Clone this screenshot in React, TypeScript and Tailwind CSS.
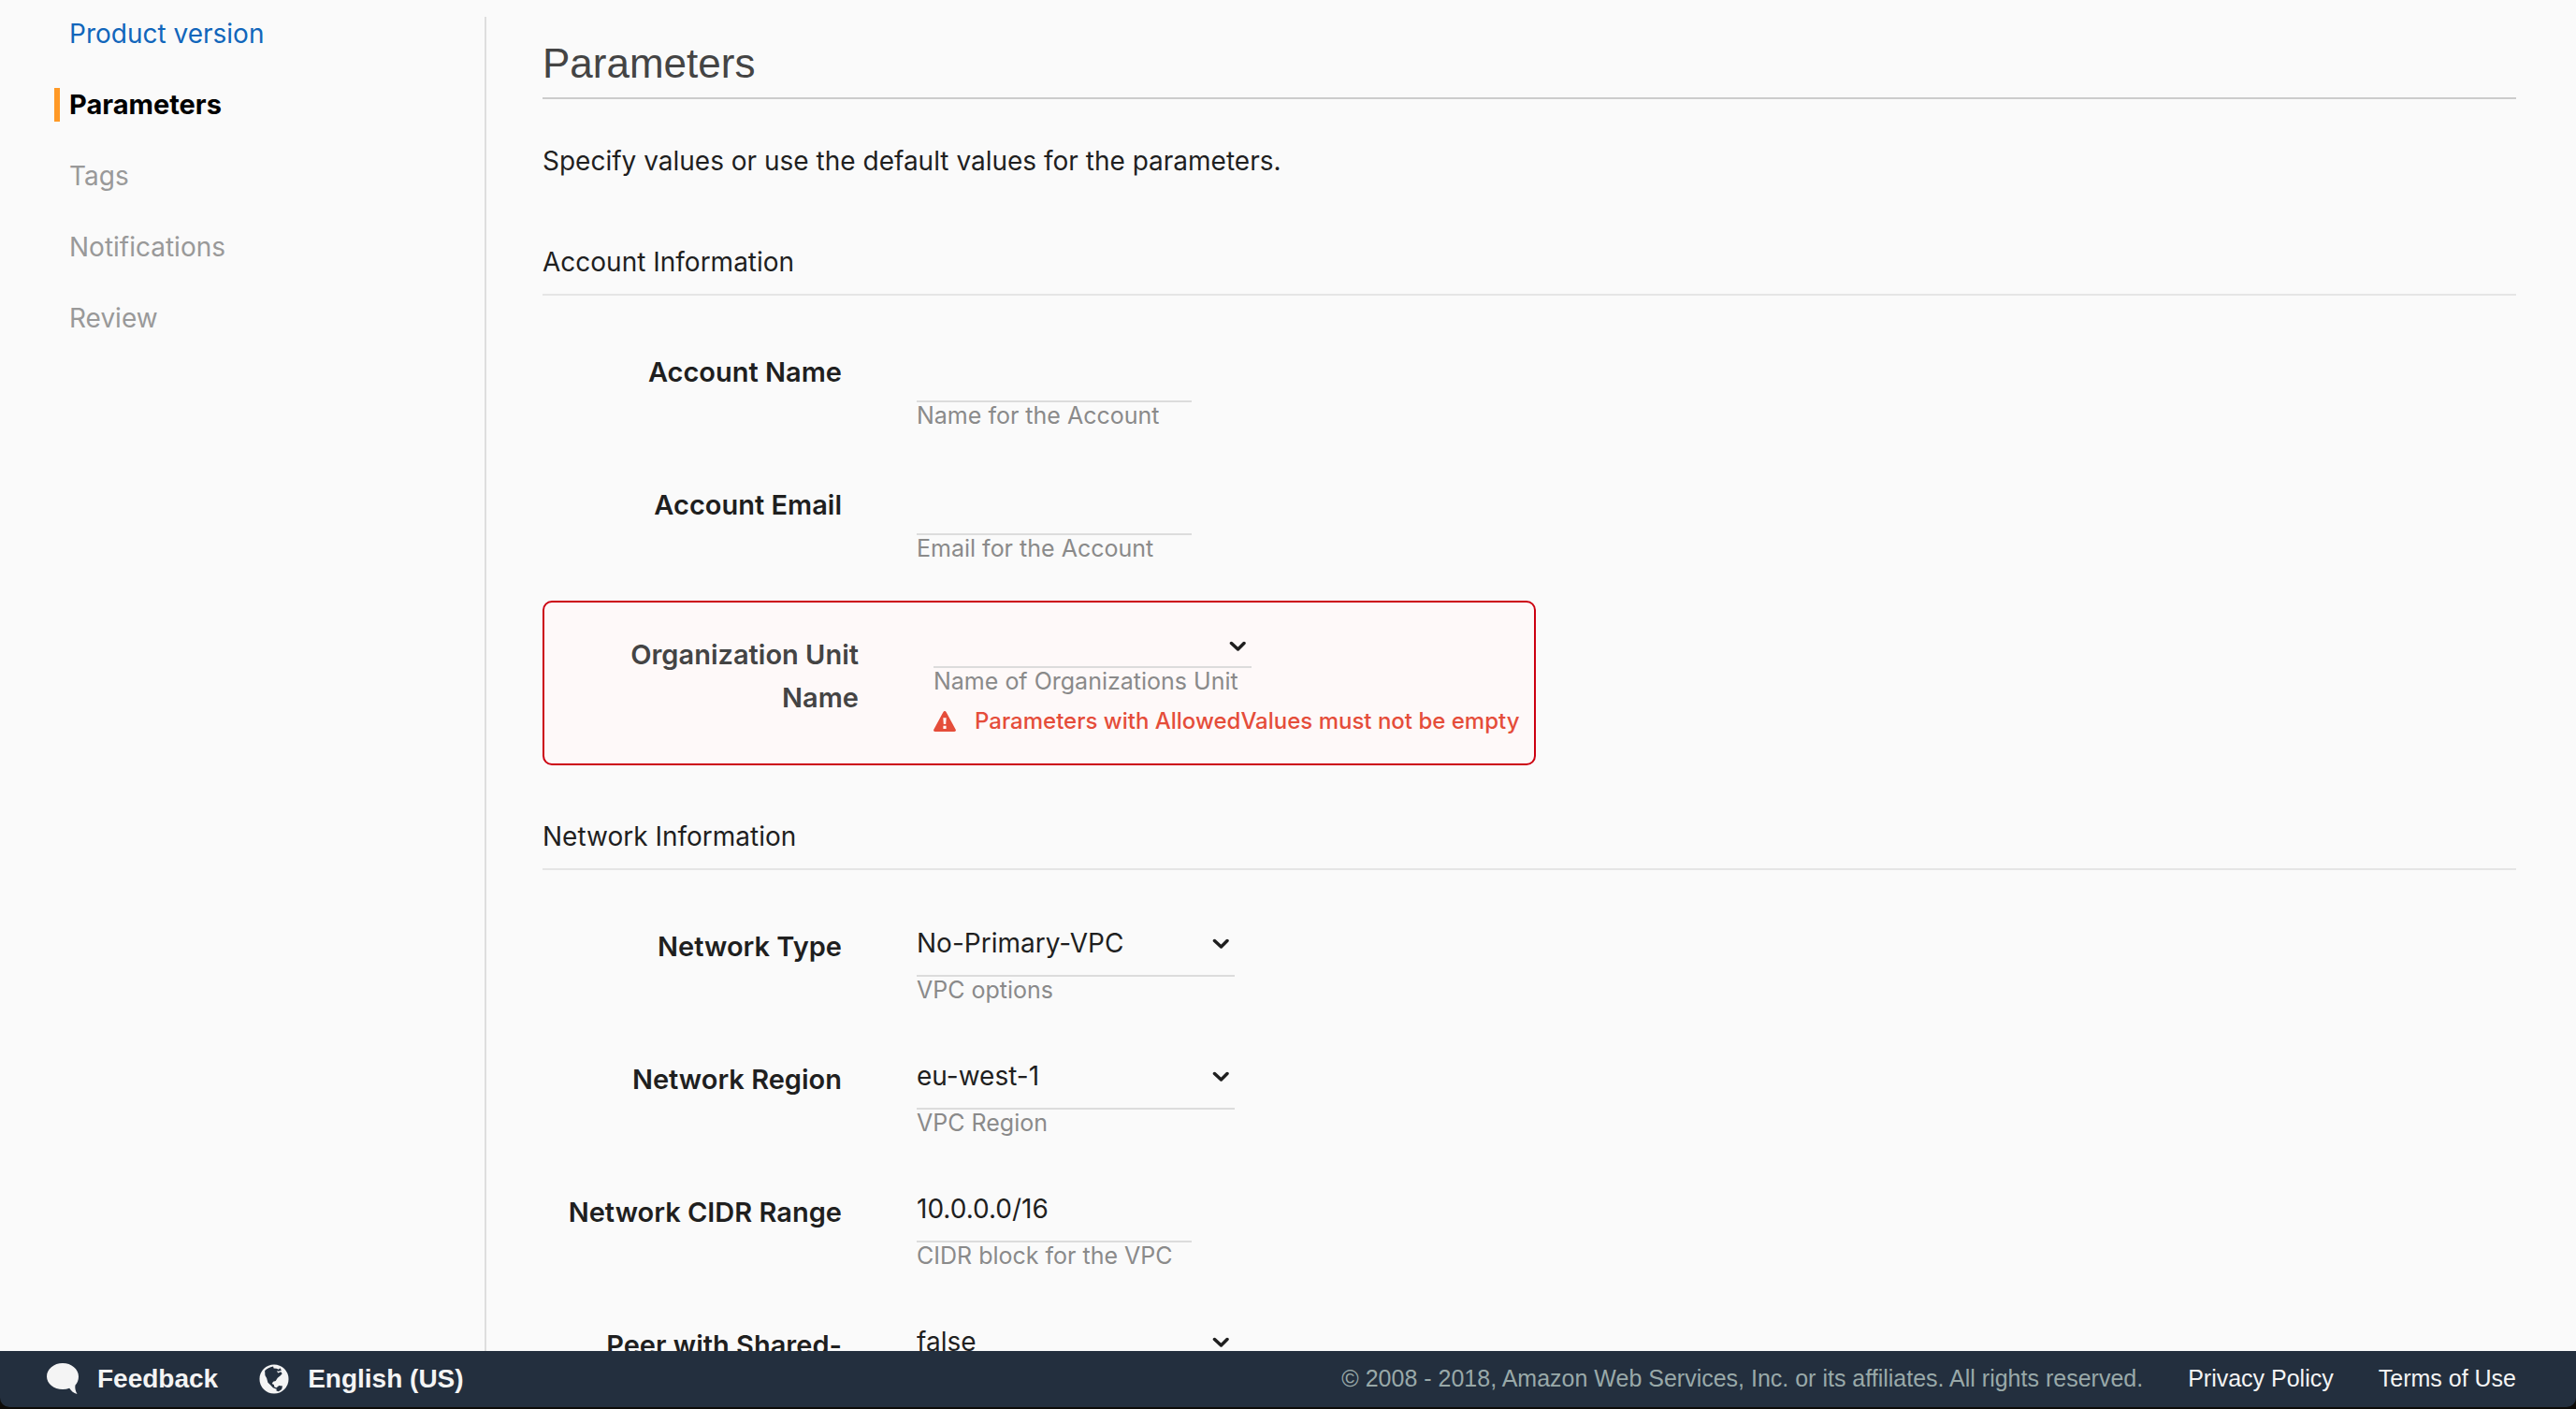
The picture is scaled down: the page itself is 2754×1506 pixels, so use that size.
import type { ReactNode } from "react";

const steps = [
  { label: "Product version", state: "done" },
  { label: "Parameters", state: "current" },
  { label: "Tags", state: "todo" },
  { label: "Notifications", state: "todo" },
  { label: "Review", state: "todo" },
];

const stepStyles: Record<string, string> = {
  done: "border-transparent text-[28px] text-[#1166bb]",
  current: "border-[#ff9926] text-[29px] font-bold text-black",
  todo: "border-transparent text-[28px] text-[#999999]",
};

function Chevron() {
  return (
    <svg
      viewBox="0 0 18 12"
      className="pointer-events-none absolute top-1/2 right-1.5 h-3 w-[18px] -translate-y-1/2"
      fill="none"
      stroke="#1f1f1f"
      strokeWidth="3.5"
      strokeLinecap="round"
      strokeLinejoin="round"
      aria-hidden="true"
    >
      <path d="M2.500 2.500 9.500 9 16 2.500" />
    </svg>
  );
}

function WarningIcon() {
  return (
    <svg viewBox="0 0 24 22" className="h-[22px] w-6 shrink-0" aria-hidden="true">
      <path
        d="M12 0c.7 0 1.200.3 1.500.900l10.200 18.800c.7 1.200-.1 2.300-1.400 2.300H1.700C.4 22-.4 20.900.3 19.700L10.500.9C10.800.3 11.300 0 12 0z"
        fill="#e54d3a"
      />
      <path d="M10.300 7.200h3.400l-.5 6.800h-2.400zM10.400 15.800h3.200V19h-3.200z" fill="#fff8f7" />
    </svg>
  );
}

function SpeechIcon() {
  return (
    <svg viewBox="0 0 34 34" className="h-[34px] w-[34px]" aria-hidden="true">
      <path
        d="M17 0C7.600 0 0 6.300 0 14.200s7.600 13.800 17 13.800c2.600 0 5-.4 7.200-1.200 1.800 3 4.600 5.300 8.300 6.200-1.700-2.700-2.500-5.900-2.100-9.200 2.300-2.600 3.600-5.900 3.600-9.600C34 6.300 26.400 0 17 0z"
        fill="#f4f4f4"
      />
    </svg>
  );
}

function GlobeIcon() {
  return (
    <svg viewBox="0 0 34 34" className="h-[34px] w-8" aria-hidden="true">
      <circle cx="17" cy="17" r="16.500" fill="#f4f4f4" />
      <path
        d="M6.500 7.500C9 5 12 3.200 16 2.600l.6 2.200 3.200.2 2.400 1.200 1.600-1.600 1.600 2.600-3.200 1-2-.6 1.200 2.600 3.400-1.400 1.400 2-2.200 2.600-3 2.200-2.200 3.400-2.800 1-1.400 2.200 2.200 1.200.6 2.600 3.200 1-.8 1.400-4-1.600-3-3.200-2.800-2.600L8.600 16l-1.800-3.200z"
        fill="#232f3e"
      />
      <path d="M20 26.500l2.600-2 4 .6-1 3.600-3.400 2.400-2.600-.8z" fill="#232f3e" />
    </svg>
  );
}

function SectionTitle({ children }: { children: ReactNode }) {
  return (
    <h2 className="border-b-2 border-[#e5e5e5] pb-[11px] text-[28px] leading-[46px]">{children}</h2>
  );
}

type FieldProps = {
  id: string;
  label: string;
  hint: string;
  value: string;
  select?: boolean;
};

function Field({ id, label, hint, value, select }: FieldProps) {
  return (
    <div className="flex items-start gap-20 pt-11">
      <label htmlFor={id} className="w-80 pt-[15px] text-right text-[29px] leading-[46px] font-semibold">
        {label}
      </label>
      <div className="text-[28px]">
        {select ? (
          <div className="relative w-[340px]">
            <select
              id={id}
              defaultValue={value}
              className="block h-[70px] w-full appearance-none border-b-2 border-[#dcdcdc] bg-transparent"
            >
              <option>{value}</option>
            </select>
            <Chevron />
          </div>
        ) : (
          <input
            id={id}
            type="text"
            defaultValue={value}
            className="block h-[70px] w-[294px] border-b-2 border-[#dcdcdc] bg-transparent"
          />
        )}
        <p className="text-[25px] leading-7 text-[#8a8a8a]">{hint}</p>
      </div>
    </div>
  );
}

export default function App() {
  return (
    <div className="flex h-screen flex-col overflow-hidden bg-[#fafafa] font-['Inter',sans-serif] text-[#1f1f1f]">
      <div className="flex min-h-0 flex-1 pt-[18px]">
        <nav className="w-[520px] shrink-0 border-r-2 border-[#dedede] pl-[58px]">
          <ul className="flex flex-col gap-10">
            {steps.map((s) => (
              <li key={s.label}>
                <a
                  href="#"
                  aria-current={s.state === "current" ? "step" : undefined}
                  className={`block border-l-6 pl-2.5 leading-9 ${stepStyles[s.state]}`}
                >
                  {s.label}
                </a>
              </li>
            ))}
          </ul>
        </nav>

        <main className="min-w-0 flex-1 overflow-hidden pt-[25px] pr-16 pl-15">
          <h1 className="border-b-2 border-[#cccccc] pb-[11px] font-['Liberation_Sans',sans-serif] text-[44px] leading-[50px] text-[#444444]">
            Parameters
          </h1>
          <p className="mt-[43px] text-[28px] leading-[46px]">
            Specify values or use the default values for the parameters.
          </p>

          <section className="mt-[62px]">
            <SectionTitle>Account Information</SectionTitle>
            <Field id="account-name" label="Account Name" hint="Name for the Account" value="" />
            <Field id="account-email" label="Account Email" hint="Email for the Account" value="" />

            <div className="mt-[42px] flex w-fit items-start gap-20 rounded-[10px] border-2 border-[#cc0011] bg-[#fef9f9] px-4 pt-6 pb-[27px]">
              <label
                htmlFor="org-unit"
                className="w-80 pt-[9px] pl-16 text-right text-[29px] leading-[46px] font-semibold text-[#444444]"
              >
                Organization Unit Name
              </label>
              <div>
                <div className="relative w-[340px]">
                  <select
                    id="org-unit"
                    defaultValue=""
                    className="block h-[46px] w-full appearance-none border-b-2 border-[#dcdcdc] bg-transparent text-[28px]"
                  >
                    <option value=""></option>
                  </select>
                  <Chevron />
                </div>
                <p className="text-[25px] leading-7 text-[#8a8a8a]">Name of Organizations Unit</p>
                <p
                  role="alert"
                  className="mt-[11px] flex items-center gap-5 text-2xl leading-9 font-medium text-[#e54d3a]"
                >
                  <WarningIcon />
                  Parameters with AllowedValues must not be empty
                </p>
              </div>
            </div>
          </section>

          <section className="mt-[53px]">
            <SectionTitle>Network Information</SectionTitle>
            <Field id="network-type" label="Network Type" hint="VPC options" value="No-Primary-VPC" select />
            <Field id="network-region" label="Network Region" hint="VPC Region" value="eu-west-1" select />
            <Field id="network-cidr" label="Network CIDR Range" hint="CIDR block for the VPC" value="10.0.0.0/16" />
            <Field id="peering" label="Peer with Shared-Services VPC" hint="VPC peering" value="false" select />
          </section>
        </main>
      </div>

      <div className="shrink-0 bg-[#0d0b08] pb-0.5">
        <footer className="flex h-[60px] items-center justify-between rounded-b-[10px] bg-[#232f3e] pr-16 pl-[50px] font-['Liberation_Sans',sans-serif] text-[25px] text-[#f4f4f4]">
          <div className="flex items-center gap-11 text-[28px] font-bold">
            <button type="button" className="flex items-center gap-5">
              <SpeechIcon />
              Feedback
            </button>
            <button type="button" className="flex items-center gap-5">
              <GlobeIcon />
              English (US)
            </button>
          </div>
          <div className="flex items-center gap-12">
            <p className="text-[#99a9a9]">
              © 2008 - 2018, Amazon Web Services, Inc. or its affiliates. All rights reserved.
            </p>
            <a href="#">Privacy Policy</a>
            <a href="#">Terms of Use</a>
          </div>
        </footer>
      </div>
    </div>
  );
}
